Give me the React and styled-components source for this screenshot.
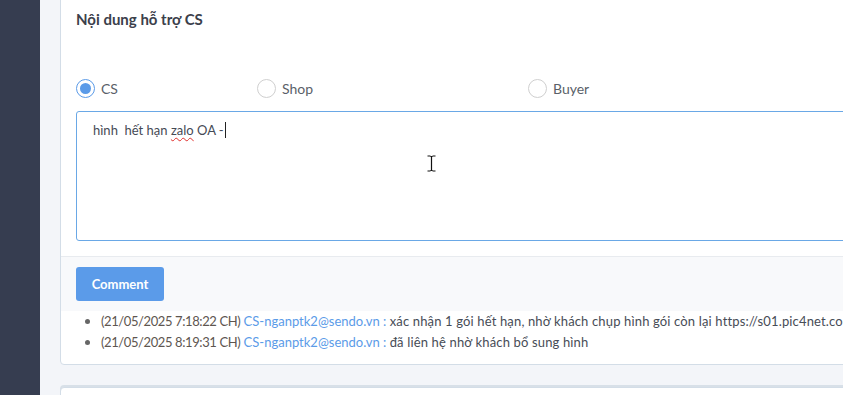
import React from "react";
import styled, { createGlobalStyle } from "styled-components";

const Global = createGlobalStyle`
  html, body { margin: 0; padding: 0; }
  body {
    background: #f3f5f9;
    font-family: "Source Sans Pro", Lato, "Liberation Sans", sans-serif;
    overflow: hidden;
  }
`;

const Page = styled.div`
  display: flex;
  width: 843px;
  height: 395px;
  overflow: hidden;
`;

const Sidebar = styled.div`
  width: 40px;
  flex: none;
  background: #363d50;
`;

const Main = styled.div`
  flex: 1;
  padding-left: 20px;
  display: flex;
  flex-direction: column;
  gap: 22px;
  min-width: 0;
`;

const Card = styled.div`
  width: 1100px;
  flex: none;
  background: #fff;
  border: 1px solid #d3dde7;
  border-radius: 4px;
  margin-top: ${(p) => p.$offset || 0}px;
  box-shadow: ${(p) => (p.$shadow ? "0 -2px 0 #d8e0e8" : "none")};
  height: ${(p) => (p.$h ? p.$h + "px" : "auto")};
`;

const Body = styled.div`
  padding: 15px 15px 15px 15px;
  border-bottom: 1px solid #e8ebef;
`;

const Title = styled.h3`
  margin: 0;
  font-size: 15px;
  font-weight: 700;
  color: #3b404b;
  line-height: 18px;
`;

const RadioRow = styled.div`
  display: flex;
  align-items: center;
  margin-top: 49px;
  height: 22px;
`;

const RadioItem = styled.label`
  display: flex;
  align-items: center;
  gap: 6px;
  width: ${(p) => p.$w}px;
  font-size: 14px;
  color: #5a5f69;
`;

const Circle = styled.span`
  box-sizing: border-box;
  width: 19px;
  height: 19px;
  border-radius: 50%;
  border: 1px solid ${(p) => (p.$on ? "#5b9be8" : "#cfcfcf")};
  display: flex;
  align-items: center;
  justify-content: center;
  background: #fff;
  &::after {
    content: "";
    display: ${(p) => (p.$on ? "block" : "none")};
    width: 11px;
    height: 11px;
    border-radius: 50%;
    background: #5b9be8;
  }
`;

const TextBox = styled.div`
  position: relative;
  box-sizing: border-box;
  margin-top: 12px;
  height: 130px;
  border: 1px solid #6aa8e6;
  border-radius: 3px;
  padding: 8px 16px;
  font-size: 13px;
  color: #454a55;
  line-height: 20px;
`;

const Spell = styled.span`
  text-decoration: underline wavy #e0302d;
  text-decoration-thickness: 1px;
  text-underline-offset: 2px;
`;

const Caret = styled.span`
  display: inline-block;
  width: 1px;
  height: 16px;
  background: #222;
  vertical-align: -3px;
  margin-left: 1px;
`;

const MouseCursor = styled.svg`
  position: absolute;
  left: 350px;
  top: 43px;
`;

const Footer = styled.div`
  background: #f8f9fb;
  padding: 10px 15px 10px;
`;

const Button = styled.button`
  display: block;
  width: 88px;
  height: 34px;
  border: none;
  border-radius: 3px;
  background: #5b9be9;
  color: #fff;
  font-family: inherit;
  font-weight: 700;
  font-size: 13px;
  padding: 0;
`;

const List = styled.ul`
  margin: 0;
  padding: 0 0 11px 40px;
  list-style: none;
  font-size: 13px;
  line-height: 21px;
  color: #474c56;
  white-space: nowrap;
  overflow: hidden;
`;

const Item = styled.li`
  position: relative;
  &::before {
    content: "";
    position: absolute;
    left: -16px;
    top: 8px;
    width: 5px;
    height: 5px;
    border-radius: 50%;
    background: #666;
  }
`;

const Time = styled.span`
  color: #5e5650;
  letter-spacing: -0.4px;
`;

const Link = styled.span`
  color: #5b9be8;
`;

const Msg = styled.span`
  letter-spacing: 0.15px;
`;

const comments = [
  {
    t: "(21/05/2025 7:18:22 CH)",
    u: "CS-nganptk2@sendo.vn :",
    m: "xác nhận 1 gói hết hạn, nhờ khách chụp hình gói còn lại https://s01.pic4net.co",
  },
  {
    t: "(21/05/2025 8:19:31 CH)",
    u: "CS-nganptk2@sendo.vn :",
    m: "đã liên hệ nhờ khách bổ sung hình",
  },
];

export default function App() {
  return (
    <>
      <Global />
      <Page>
        <Sidebar />
        <Main>
          <Card $offset={-6}>
            <Body>
              <Title>Nội dung hỗ trợ CS</Title>
              <RadioRow>
                <RadioItem $w={181}>
                  <Circle $on />
                  CS
                </RadioItem>
                <RadioItem $w={271}>
                  <Circle />
                  Shop
                </RadioItem>
                <RadioItem $w={200}>
                  <Circle />
                  Buyer
                </RadioItem>
              </RadioRow>
              <TextBox>
                hình&nbsp; hết hạn <Spell>zalo</Spell> OA -<Caret />
                <MouseCursor width="9" height="17" viewBox="0 0 9 17">
                  <path d="M0.5 1H3.5M5.5 1H8.5M4.5 1.5V15.5M0.5 16H3.5M5.5 16H8.5M3.5 1.5H5.5M3.5 15.5H5.5" stroke="#111" strokeWidth="1.2" fill="none" />
                </MouseCursor>
              </TextBox>
            </Body>
            <Footer>
              <Button>Comment</Button>
            </Footer>
            <List>
              {comments.map((c, i) => (
                <Item key={i}>
                  <Time>{c.t}</Time> <Link>{c.u}</Link> <Msg>{c.m}</Msg>
                </Item>
              ))}
            </List>
          </Card>
          <Card $shadow $h={40} />
        </Main>
      </Page>
    </>
  );
}
